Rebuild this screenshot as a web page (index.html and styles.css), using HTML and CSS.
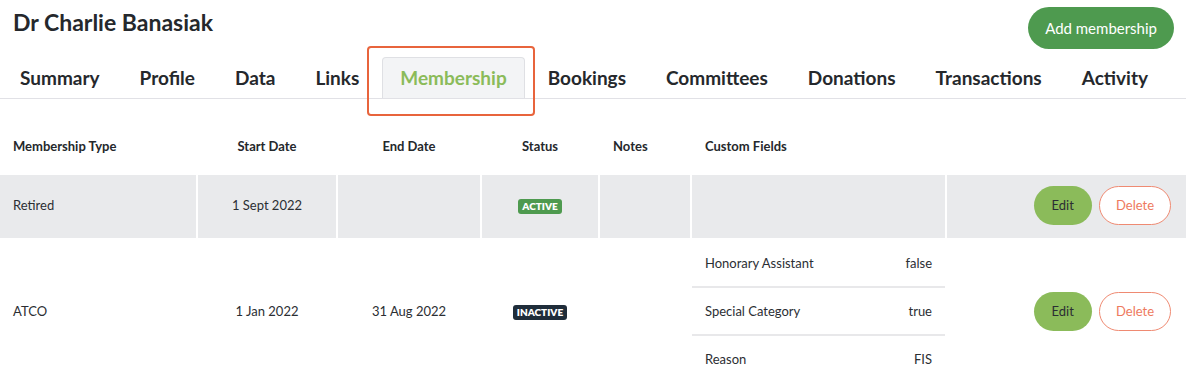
FILE: index.html
```html
<!DOCTYPE html>
<html lang="en">
<head>
  <meta charset="UTF-8">
  <title>Dr Charlie Banasiak - Membership</title>
  <link rel="stylesheet" href="styles.css">
</head>
<body>

  <div class="cabecera">
    <h1>Dr Charlie Banasiak</h1>
    <button class="btn-add">Add membership</button>
  </div>

  <nav class="tabs">
    <a href="#">Summary</a>
    <a href="#">Profile</a>
    <a href="#">Data</a>
    <a href="#">Links</a>
    <a href="#" class="activo">Membership</a>
    <a href="#">Bookings</a>
    <a href="#">Committees</a>
    <a href="#">Donations</a>
    <a href="#">Transactions</a>
    <a href="#">Activity</a>
    <div class="resaltado"></div>
  </nav>

  <table class="tabla">
    <colgroup>
      <col style="width: 196px">
      <col style="width: 138px">
      <col style="width: 142px">
      <col style="width: 116px">
      <col style="width: 90px">
      <col style="width: 253px">
      <col>
    </colgroup>
    <thead>
      <tr>
        <th class="izq">Membership Type</th>
        <th>Start Date</th>
        <th>End Date</th>
        <th>Status</th>
        <th class="izq">Notes</th>
        <th class="izq">Custom Fields</th>
        <th></th>
      </tr>
    </thead>
    <tbody>
      <tr class="gris">
        <td class="izq">Retired</td>
        <td>1 Sept 2022</td>
        <td></td>
        <td><span class="badge activa">Active</span></td>
        <td></td>
        <td></td>
        <td class="acciones">
          <button class="btn-edit">Edit</button>
          <button class="btn-delete">Delete</button>
        </td>
      </tr>
      <tr>
        <td class="izq">ATCO</td>
        <td>1 Jan 2022</td>
        <td>31 Aug 2022</td>
        <td><span class="badge inactiva">Inactive</span></td>
        <td></td>
        <td class="campos">
          <div class="campo"><span>Honorary Assistant</span><span>false</span></div>
          <div class="campo"><span>Special Category</span><span>true</span></div>
          <div class="campo"><span>Reason</span><span>FIS</span></div>
        </td>
        <td class="acciones">
          <button class="btn-edit">Edit</button>
          <button class="btn-delete">Delete</button>
        </td>
      </tr>
    </tbody>
  </table>

</body>
</html>
```

FILE: styles.css
```css
body {
  margin: 0;
  font-family: Lato, "Noto Sans", sans-serif;
  color: #2b2e33;
  background-color: #fff;
  overflow: hidden;
}

button {
  font-family: inherit;
  cursor: pointer;
}

.cabecera {
  display: flex;
  justify-content: space-between;
  align-items: flex-start;
  padding: 7px 12px 0 13px;
}

.cabecera h1 {
  margin: 0;
  font-size: 23px;
  line-height: 30px;
  font-weight: 700;
  color: #25282c;
}

.btn-add {
  height: 42px;
  padding: 0 17px;
  border: none;
  border-radius: 21px;
  background-color: #4e9a4f;
  color: #fff;
  font-size: 15px;
}

/* Pestañas */
.tabs {
  position: relative;
  display: flex;
  margin-top: 8px;
  border-bottom: 1px solid #e1e1e6;
}

.tabs a {
  padding: 9px 20px 9px;
  font-size: 19px;
  font-weight: 700;
  color: #25282c;
  text-decoration: none;
}

.tabs a.activo {
  margin: 0 3px;
  padding: 8px 17px 9px;
  color: #8bbb5a;
  background-color: #f3f4f6;
  border: 1px solid #dfe0e4;
  border-bottom: none;
  border-radius: 4px 4px 0 0;
}

/* Recuadro de anotación */
.resaltado {
  position: absolute;
  left: 367px;
  top: -11px;
  width: 164px;
  height: 66px;
  border: 2px solid #e8643c;
  border-radius: 4px;
  pointer-events: none;
}

/* Tabla */
.tabla {
  width: calc(100% + 4px);
  margin: 18px -2px 0;
  border-collapse: separate;
  border-spacing: 2px;
  table-layout: fixed;
  font-size: 13px;
}

.tabla th {
  height: 54px;
  padding: 0;
  font-weight: 700;
  color: #25282c;
  text-align: center;
}

.tabla td {
  padding: 0;
  text-align: center;
  color: #2b2e33;
}

.tabla .izq {
  text-align: left;
  padding-left: 13px;
}

.tabla tr.gris td {
  height: 63px;
  padding-bottom: 3px;
  box-sizing: border-box;
  background-color: #e9eaec;
}

.badge {
  display: inline-block;
  padding: 2px 4px;
  border-radius: 3px;
  font-size: 10px;
  font-weight: 800;
  color: #fff;
  text-transform: uppercase;
  line-height: 11px;
}

.badge.activa {
  background-color: #4e9a4f;
}

.badge.inactiva {
  background-color: #1f2d3a;
}

.acciones {
  text-align: right !important;
  padding-right: 15px !important;
}

.btn-edit,
.btn-delete {
  height: 39px;
  border-radius: 20px;
  font-size: 13px;
  vertical-align: middle;
}

.btn-edit {
  width: 58px;
  margin-right: 4px;
  border: none;
  background-color: #8bbb5a;
  color: #2b2e33;
}

.btn-delete {
  width: 72px;
  border: 1px solid #ef8a72;
  background-color: #fff;
  color: #ee7a5e;
}

.campos {
  text-align: left !important;
}

.campo {
  display: flex;
  justify-content: space-between;
  align-items: center;
  height: 46px;
  padding: 0 13px;
  border-bottom: 2px solid #e8e8ea;
}

.campo:last-child {
  border-bottom: none;
}
```
